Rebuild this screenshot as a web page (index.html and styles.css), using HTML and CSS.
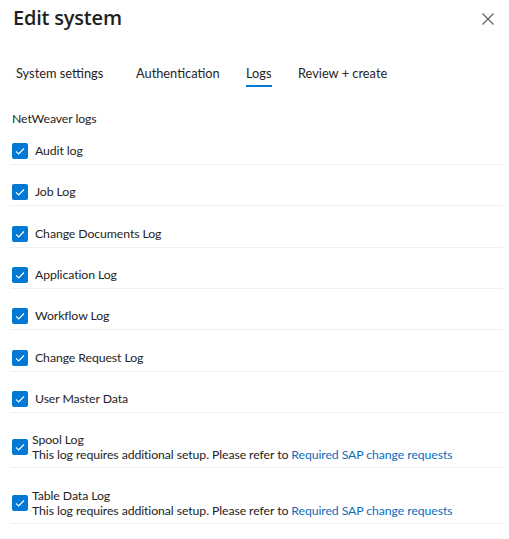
FILE: index.html
```html
<!DOCTYPE html>
<html lang="en">
<head>
<meta charset="utf-8">
<title>Edit system</title>
<link rel="stylesheet" href="styles.css">
</head>
<body>
<div class="panel">
  <header class="header">
    <h1 class="title">Edit system</h1>
    <button class="close" aria-label="Close">
      <svg width="12" height="12" viewBox="0 0 12 12"><path d="M0.5 0.5 L11.5 11.5 M11.5 0.5 L0.5 11.5" stroke="#605e5c" stroke-width="1.1" fill="none"/></svg>
    </button>
  </header>
  <nav class="tabs">
    <div class="tab t1"><span>System settings</span></div>
    <div class="tab t2"><span>Authentication</span></div>
    <div class="tab t3"><span class="active">Logs</span></div>
    <div class="tab t4"><span>Review + create</span></div>
  </nav>
  <section class="section">
    <div class="section-label">NetWeaver logs</div>
    <ul class="list">
      <li class="row"><span class="cb"><svg viewBox="0 0 16 16"><path d="M4 8.3 L6.7 11 L12 5.5" stroke="#fff" stroke-width="1.2" fill="none"/></svg></span><span class="label">Audit log</span></li>
      <li class="row"><span class="cb"><svg viewBox="0 0 16 16"><path d="M4 8.3 L6.7 11 L12 5.5" stroke="#fff" stroke-width="1.2" fill="none"/></svg></span><span class="label">Job Log</span></li>
      <li class="row"><span class="cb"><svg viewBox="0 0 16 16"><path d="M4 8.3 L6.7 11 L12 5.5" stroke="#fff" stroke-width="1.2" fill="none"/></svg></span><span class="label">Change Documents Log</span></li>
      <li class="row"><span class="cb"><svg viewBox="0 0 16 16"><path d="M4 8.3 L6.7 11 L12 5.5" stroke="#fff" stroke-width="1.2" fill="none"/></svg></span><span class="label">Application Log</span></li>
      <li class="row"><span class="cb"><svg viewBox="0 0 16 16"><path d="M4 8.3 L6.7 11 L12 5.5" stroke="#fff" stroke-width="1.2" fill="none"/></svg></span><span class="label">Workflow Log</span></li>
      <li class="row"><span class="cb"><svg viewBox="0 0 16 16"><path d="M4 8.3 L6.7 11 L12 5.5" stroke="#fff" stroke-width="1.2" fill="none"/></svg></span><span class="label">Change Request Log</span></li>
      <li class="row"><span class="cb"><svg viewBox="0 0 16 16"><path d="M4 8.3 L6.7 11 L12 5.5" stroke="#fff" stroke-width="1.2" fill="none"/></svg></span><span class="label">User Master Data</span></li>
      <li class="row two"><span class="cb"><svg viewBox="0 0 16 16"><path d="M4 8.3 L6.7 11 L12 5.5" stroke="#fff" stroke-width="1.2" fill="none"/></svg></span><span class="label"><span class="name">Spool Log</span><span class="desc">This log requires additional setup. Please refer to <a href="#">Required SAP change requests</a></span></span></li>
      <li class="row two"><span class="cb"><svg viewBox="0 0 16 16"><path d="M4 8.3 L6.7 11 L12 5.5" stroke="#fff" stroke-width="1.2" fill="none"/></svg></span><span class="label"><span class="name">Table Data Log</span><span class="desc">This log requires additional setup. Please refer to <a href="#">Required SAP change requests</a></span></span></li>
    </ul>
  </section>
</div>
</body>
</html>
```

FILE: styles.css
```css
* { box-sizing: border-box; }
html, body { margin: 0; padding: 0; background: #fff; }
body {
  font-family: "Lato", "Open Sans", sans-serif;
  font-size: 12.3px;
  letter-spacing: -0.1px;
  color: #252423;
}
.panel { width: 509px; }
.header {
  display: flex;
  justify-content: space-between;
  align-items: flex-start;
  padding: 4px 15px 0 13px;
}
.title {
  margin: 0;
  font-family: "Open Sans", sans-serif;
  font-size: 20px;
  font-weight: 600;
  line-height: 28px;
  letter-spacing: -0.2px;
  color: #201f1e;
}
.close {
  border: 0;
  background: none;
  padding: 0;
  margin-top: 9px;
  width: 12px;
  height: 12px;
  display: flex;
}
.tabs {
  display: flex;
  margin-top: 33px;
  padding-left: 16px;
  height: 26px;
  font-size: 12.8px;
  letter-spacing: 0;
}
.tab { line-height: 16px; color: #252423; }
.tab span { display: inline-block; padding-bottom: 4px; }
.tab .active { border-bottom: 2px solid #0078d4; }
.t1 { width: 120px; }
.t2 { width: 110px; }
.t3 { width: 52px; }
.section { padding: 0 6px 0 12px; margin-top: 20px; }
.section-label { line-height: 16px; }
.list { list-style: none; margin: 0; padding: 0; margin-left: -2px; }
.row {
  display: flex;
  align-items: center;
  padding: 19.33px 0 5px 2px;
  border-bottom: 1px solid #efefef;
}
.row:first-child { padding-top: 16px; }
.cb {
  width: 16px;
  height: 16px;
  border-radius: 2px;
  background: #0078d4;
  flex: none;
  display: flex;
}
.cb svg { width: 16px; height: 16px; }
.label { margin-left: 7px; line-height: 16px; }
.two .label { margin-left: 4px; display: flex; flex-direction: column; line-height: 15px; }
.desc { white-space: nowrap; }
.desc a { color: #0f6cbd; text-decoration: none; }
```
